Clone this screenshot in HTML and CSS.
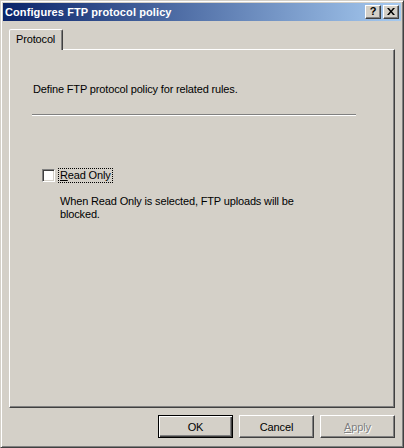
FILE: index.html
```html
<!DOCTYPE html>
<html>
<head>
<meta charset="utf-8">
<link rel="stylesheet" href="styles.css">
</head>
<body>
<div class="window">
  <div class="titlebar">
    <span class="title">Configures FTP protocol policy</span>
    <div class="caption-btns">
      <span class="cbtn help">?</span>
      <span class="cbtn close"><svg width="8" height="7" viewBox="0 0 8 7"><path d="M0 0h2l2 2.5L6 0h2L5 3.5 8 7H6L4 4.5 2 7H0l3-3.5z" fill="#000"/></svg></span>
    </div>
  </div>
  <div class="content">
    <div class="tabstrip">
      <div class="tab">Protocol</div>
    </div>
    <div class="panel">
      <p class="intro">Define FTP protocol policy for related rules.</p>
      <div class="sep"></div>
      <div class="check-row">
        <span class="checkbox"></span>
        <span class="label"><span class="ul">R</span>ead Only</span>
      </div>
      <p class="desc">When Read Only is selected, FTP uploads will be<br>blocked.</p>
    </div>
    <div class="buttons">
      <button class="btn default">OK</button>
      <button class="btn">Cancel</button>
      <button class="btn disabled"><span class="ul">A</span>pply</button>
    </div>
  </div>
</div>
</body>
</html>
```
FILE: styles.css
```css
* { box-sizing: border-box; }
html, body { margin: 0; padding: 0; }
body {
  background: #d4d0c8;
  font-family: "Liberation Sans", Arial, sans-serif;
  font-size: 11px;
  color: #000;
}
.window {
  width: 404px;
  height: 448px;
  background: #d4d0c8;
  border: 1px solid;
  border-color: #d4d0c8 #404040 #404040 #d4d0c8;
  box-shadow: inset 1px 1px #fff, inset -1px -1px #808080;
  padding: 2px;
  display: flex;
  flex-direction: column;
}
.titlebar {
  height: 18px;
  background: linear-gradient(to right, #0a246a, #a6caf0);
  display: flex;
  align-items: center;
  justify-content: space-between;
  padding: 0 2px 0 2px;
}
.title {
  color: #fff;
  font-weight: bold;
  font-size: 11px;
  letter-spacing: 0.1px;
}
.caption-btns { display: flex; gap: 2px; }
.cbtn {
  width: 16px;
  height: 14px;
  background: #d4d0c8;
  border: 1px solid;
  border-color: #fff #404040 #404040 #fff;
  box-shadow: inset -1px -1px #808080;
  display: flex;
  align-items: center;
  justify-content: center;
  font-weight: bold;
  font-size: 11px;
  line-height: 1;
  padding-bottom: 1px;
}
.content {
  flex: 1;
  padding: 8px 6px 0 6px;
  display: flex;
  flex-direction: column;
  letter-spacing: -0.15px;
}
.tabstrip { height: 20px; display: flex; }
.tab {
  width: 54px;
  height: 21px;
  border: 1px solid;
  border-bottom: none;
  border-color: #fff #404040 transparent #fff;
  box-shadow: inset -1px 0 #808080;
  border-radius: 2px 2px 0 0;
  padding: 3px 0 0 6px;
  background: #d4d0c8;
  position: relative;
  z-index: 1;
}
.panel {
  height: 359px;
  border: 1px solid;
  border-color: #fff #404040 #404040 #fff;
  box-shadow: inset -1px -1px #808080;
  padding: 33px 0 0 23px;
}
.intro { margin: 0; line-height: 13px; }
.sep {
  width: 324px;
  margin: 18px 0 0 -1px;
  border-top: 1px solid #808080;
  border-bottom: 1px solid #fff;
}
.check-row {
  margin: 53px 0 0 9px;
  display: flex;
  align-items: center;
  height: 13px;
}
.checkbox {
  width: 13px;
  height: 13px;
  background: #fff;
  border: 1px solid;
  border-color: #808080 #fff #fff #808080;
  box-shadow: inset 1px 1px #404040, inset -1px -1px #d4d0c8;
}
.label {
  margin-left: 4px;
  padding: 0 1px;
  outline: 1px dotted #000;
  line-height: 13px;
}
.ul { text-decoration: underline; }
.desc {
  margin: 13px 0 0 27px;
  line-height: 13px;
}
.buttons {
  margin-top: 7px;
  display: flex;
  justify-content: flex-end;
  gap: 6px;
}
.btn {
  width: 75px;
  height: 23px;
  font-family: inherit;
  font-size: 11px;
  letter-spacing: inherit;
  background: #d4d0c8;
  border: 1px solid;
  border-color: #fff #404040 #404040 #fff;
  box-shadow: inset -1px -1px #808080;
  padding: 0;
  color: #000;
}
.btn.default {
  border: 1px solid #000;
  box-shadow: inset 1px 1px #fff, inset -1px -1px #404040, inset -2px -2px #808080;
}
.btn.disabled {
  color: #808080;
  text-shadow: 1px 1px #fff;
}
```
